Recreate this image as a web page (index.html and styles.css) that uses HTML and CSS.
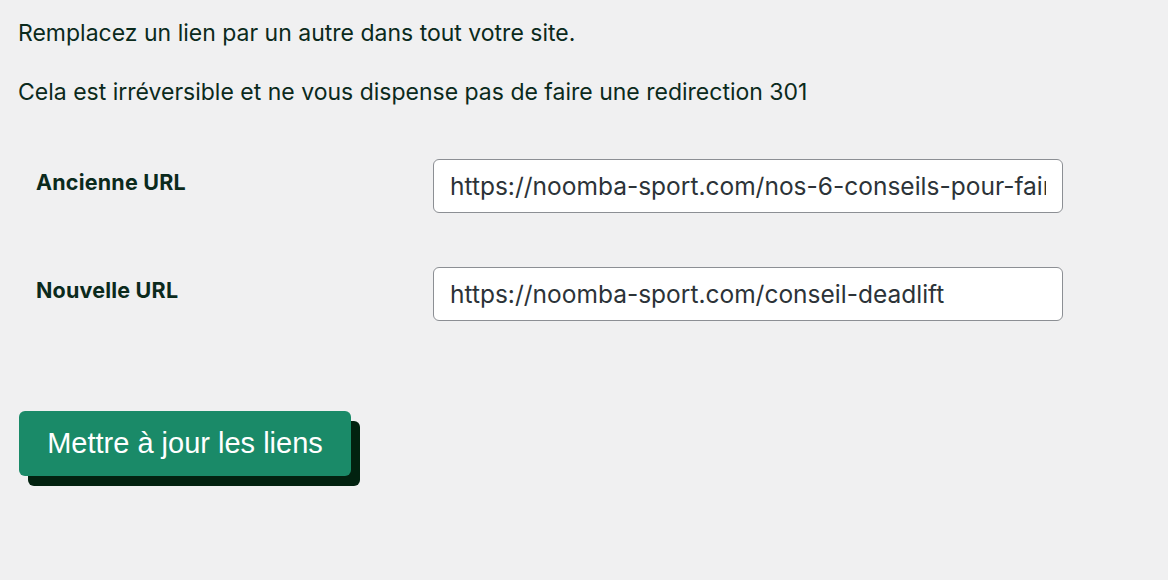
FILE: index.html
```html
<!DOCTYPE html>
<html lang="fr">
<head>
<meta charset="utf-8">
<link rel="stylesheet" href="styles.css">
</head>
<body>
<div class="page">
  <p class="intro">Remplacez un lien par un autre dans tout votre site.</p>
  <p class="intro">Cela est irréversible et ne vous dispense pas de faire une redirection 301</p>
  <div class="form">
    <div class="row">
      <label class="label">Ancienne URL</label>
      <input class="field" type="text" value="https://noomba-sport.com/nos-6-conseils-pour-faire-un-deadlift">
    </div>
    <div class="row">
      <label class="label">Nouvelle URL</label>
      <input class="field" type="text" value="https://noomba-sport.com/conseil-deadlift">
    </div>
  </div>
  <div class="actions">
    <button class="btn" type="button">Mettre à jour les liens</button>
  </div>
</div>
</body>
</html>
```
FILE: styles.css
```css
html, body {
  margin: 0;
  padding: 0;
  background: #f0f0f1;
}
body {
  font-family: Inter, "Noto Sans", sans-serif;
  color: #0b2a1c;
  width: 1168px;
  height: 580px;
  overflow: hidden;
}
.page {
  padding: 19px 18px;
}
.intro {
  margin: 0 0 31px 0;
  font-size: 23px;
  line-height: 28px;
}
.form {
  margin-top: 53px;
  display: flex;
  flex-direction: column;
  gap: 54px;
}
.row {
  display: flex;
  align-items: flex-start;
}
.label {
  width: 397px;
  padding-left: 18px;
  padding-top: 10px;
  font-weight: 700;
  font-size: 21.5px;
  line-height: 26px;
  letter-spacing: 0.2px;
}
.field {
  width: 630px;
  height: 54px;
  box-sizing: border-box;
  border: 1px solid #8c8f94;
  border-radius: 6px;
  background: #fff;
  padding: 0 16px;
  font-family: Inter, "Noto Sans", sans-serif;
  font-size: 24.5px;
  color: #2c3338;
  outline: none;
}
.actions {
  margin-top: 90px;
}
.btn {
  margin-left: 1px;
  width: 332px;
  height: 65px;
  border: none;
  border-radius: 6px;
  background: #1a8a68;
  color: #fff;
  font-family: "Liberation Sans", Arial, sans-serif;
  font-size: 29px;
  box-shadow: 9px 10px 0 #022210;
  cursor: pointer;
}
```
